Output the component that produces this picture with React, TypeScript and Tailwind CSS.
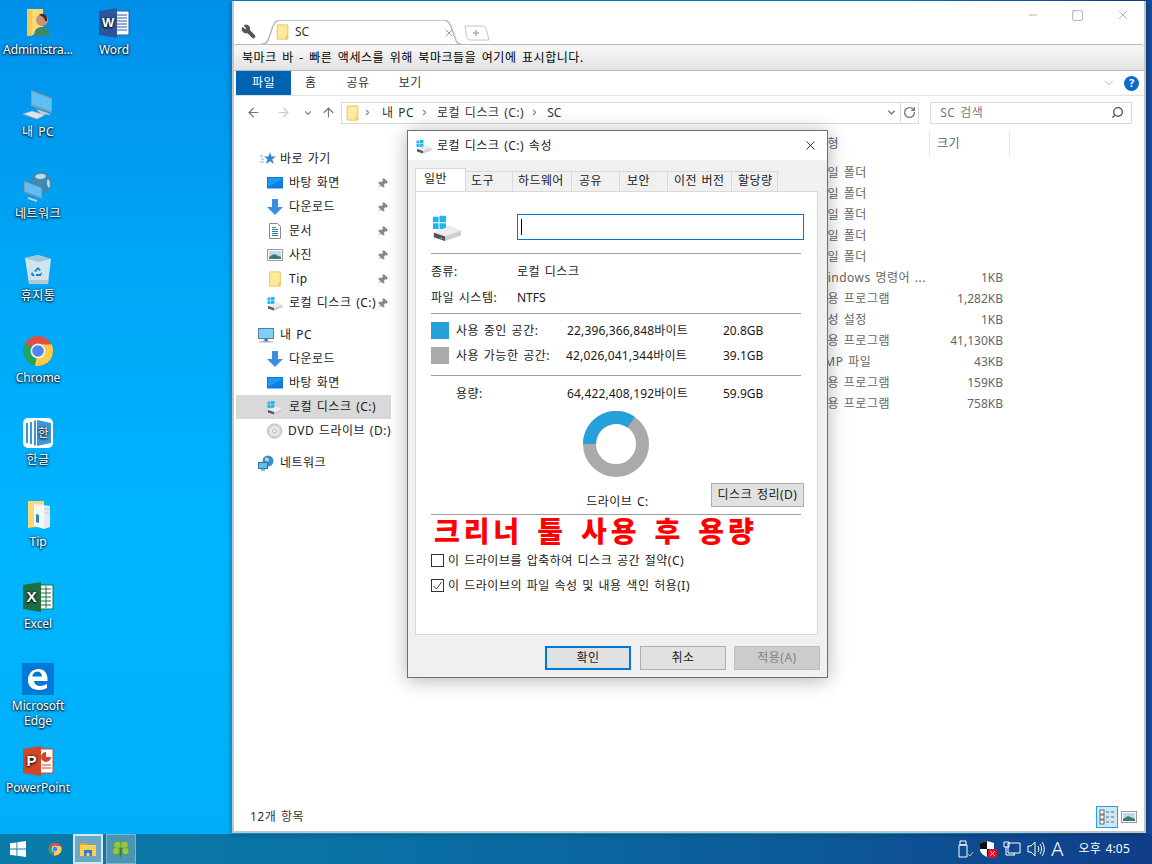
import { ArrowLeft, ArrowRight, ArrowUp, ChevronDown, ChevronRight, Minus, Pin, RotateCw, Search, Square, Wrench, X } from "lucide-react";
import type { ReactNode } from "react";

const FolderIcon = ({ className = "" }: { className?: string }) => (
	<svg viewBox="0 0 14 18" className={className}>
		<path d="M1 1h12v16H1z" fill="#ffe99a" stroke="#e6c354" />
		<path d="M10.500 13h2.500v4h-2.500z" fill="#f2cb58" />
	</svg>
);

const DriveIcon = ({ size = 16 }: { size?: number }) => (
	<svg viewBox="0 0 32 32" width={size} height={size}>
		<path d="M1 5h6v6H1zM8 4h7v7H8zM1 12h6v6H1zM8 12h7v6H8z" fill="#1fb6f0" />
		<path d="M2 22l17-7 12 5v5L14 31 2 27z" fill="#cfcfcf" />
		<path d="M2 22l12 4 17-6-12-5z" fill="#ededed" />
		<path d="M2 22l12 4v5L2 27z" fill="#555" />
		<path d="M9 27l2 .7v1.300L9 28.300z" fill="#5fd35f" />
	</svg>
);

const DesktopBlue = () => (
	<svg viewBox="0 0 16 16" className="size-4">
		<rect x="0" y="2" width="16" height="12" fill="#0f74d8" />
		<rect x="1" y="3" width="14" height="9" fill="#1e9bf0" />
		<path d="M1 12l14-8v8z" fill="#0d7fe0" />
		<rect x="0" y="13" width="16" height="1" fill="#7fc4f5" />
	</svg>
);

const DownloadBlue = () => (
	<svg viewBox="0 0 16 16" className="size-4">
		<path d="M5 0h6v8h5l-8 8-8-8h5z" fill="#3b8fe0" />
	</svg>
);

const DocIcon = () => (
	<svg viewBox="0 0 16 16" className="size-4">
		<path d="M2.500.5h8l3 3v12h-11z" fill="#fff" stroke="#8a8a8a" />
		<path d="M5 4.500h4M5 6.500h6M5 8.500h6M5 10.500h6M5 12.500h6" stroke="#2f7f9f" />
	</svg>
);

const PictureIcon = ({ className = "size-4" }: { className?: string }) => (
	<svg viewBox="0 0 16 14" className={className}>
		<rect x=".5" y="1.500" width="15" height="11" fill="#fff" stroke="#9a9a9a" />
		<rect x="2" y="3" width="12" height="8" fill="#bcd9ef" />
		<path d="M2 9l5-3 7 3v2H2z" fill="#3e7a70" />
	</svg>
);

const MonitorSmall = () => (
	<svg viewBox="0 0 16 16" className="size-4">
		<rect x=".5" y="1.500" width="15" height="10" fill="#7fd0f7" stroke="#5a7f9c" />
		<path d="M5 14h6M7 12h2v2H7z" stroke="#5a7f9c" />
		<path d="M1 15h14" stroke="#9ab0c0" />
	</svg>
);

const NetworkSmall = () => (
	<svg viewBox="0 0 16 16" className="size-4">
		<circle cx="10" cy="6" r="5.500" fill="#3d8fc8" />
		<path d="M7 3c2-1 4 0 4 2s-3 2-4 0z" fill="#a9d8ee" />
		<rect x=".5" y="7.500" width="9" height="6" fill="#5cc0f2" stroke="#3a6f94" />
		<path d="M3 15h4" stroke="#3a6f94" />
	</svg>
);

const StarBlue = () => (
	<svg viewBox="0 0 16 16" className="size-4">
		<path d="M10 1l1.500 4.500H16l-3.700 2.800 1.400 4.700L10 10.200 6 13l1.400-4.700L4 5.500h4.500z" fill="#2f86dd" />
		<path d="M0 5h3M1 8h3M0 11h4" stroke="#7db8ec" />
	</svg>
);

const DvdIcon = () => (
	<svg viewBox="0 0 16 16" className="size-4">
		<circle cx="8" cy="8" r="7.500" fill="#d8d8d8" stroke="#b5b5b5" />
		<circle cx="8" cy="8" r="5" fill="#e9e9e9" />
		<circle cx="8" cy="8" r="2" fill="#fff" stroke="#aaa" />
	</svg>
);

const AdminIcon = () => (
	<svg viewBox="0 0 32 32" className="size-8">
		<path d="M5 2h16v24L5 29z" fill="#f9d976" />
		<path d="M5 2l5 2v25l-5-1z" fill="#f5c85a" />
		<path d="M12 29c0-7 4-9 8-9s8 2 8 9z" fill="#3d8a6a" />
		<circle cx="20" cy="13" r="6" fill="#c9926e" />
		<path d="M17 8c4-3 9 0 8 6l-2 0c0-3-3-5-6-6z" fill="#333" />
	</svg>
);

const WordIcon = () => (
	<svg viewBox="0 0 32 32" className="size-8">
		<rect x="17" y="4" width="14" height="24" fill="#fff" stroke="#2b5ba8" />
		<path d="M19 8h10M19 11h10M19 14h10M19 17h10M19 20h10M19 23h10" stroke="#2b5ba8" />
		<path d="M1 4l18-3v30L1 28z" fill="#2b579a" />
		<text x="10" y="20" fontSize="13" fontWeight="700" fill="#fff" textAnchor="middle" fontFamily="Liberation Sans">W</text>
	</svg>
);

const PcIcon = () => (
	<svg viewBox="0 0 32 32" className="size-8">
		<path d="M9 1l21 8v15L9 17z" fill="#8f9aa5" />
		<path d="M10 3l19 7v12L10 15z" fill="#5cc0f5" />
		<path d="M14 20l12 4 3 2-10-1z" fill="#c8ced3" />
		<path d="M1 25l9-3 13 4-8 4z" fill="#dfe3e6" stroke="#aab" strokeWidth=".5" />
	</svg>
);

const NetworkIcon = () => (
	<svg viewBox="0 0 32 32" className="size-8">
		<circle cx="19" cy="12" r="11" fill="#3f89b0" />
		<path d="M13 5c4-3 9-3 11 0-1 3-4 3-6 3s-4 0-5-3zM26 8c2 2 3 6 1 9-2-2-3-6-1-9z" fill="#b9dbe8" />
		<path d="M2 10l18 7v11L2 21z" fill="#8d9aa5" />
		<path d="M3 11l16 6v9L3 20z" fill="#5cc0f5" />
		<path d="M6 26l9 3v2l-9-3z" fill="#c8ced3" />
	</svg>
);

const BinIcon = () => (
	<svg viewBox="0 0 32 32" className="size-8">
		<path d="M3 5l13-3 13 4-3 25H7z" fill="#cfe4ee" />
		<path d="M3 5l13-3 13 4-13 3z" fill="#9fc8dc" />
		<path d="M7 27h19l-.5 4H7.500z" fill="#b9c6cc" />
		<path d="M16 14l3 3-2 1-1-2-2 3-2-1zM20 19l-1 4h-5v-2h4zM10 19l3 4-3 0-1-2z" fill="#1c7fc8" />
	</svg>
);

const ChromeIcon = ({ className = "size-8" }: { className?: string }) => (
	<svg viewBox="0 0 32 32" className={className}>
		<circle cx="16" cy="16" r="15" fill="#dd5044" />
		<path d="M16 16L3 8.500A15 15 0 0 0 13 30.700z" fill="#1fa463" />
		<path d="M16 16h15a15 15 0 0 1-18 14.700z" fill="#ffcd40" />
		<path d="M16 9.500h13.800A15 15 0 0 1 31 16H16z" fill="#ffcd40" />
		<circle cx="16" cy="16" r="7.500" fill="#f1f1f1" />
		<circle cx="16" cy="16" r="5.800" fill="#4f86ec" />
	</svg>
);

const HangulIcon = () => (
	<svg viewBox="0 0 32 32" className="size-8">
		<rect x="1" y="1" width="30" height="30" rx="5" fill="#fff" />
		<path d="M4 6h2v20H4zM8 5h2v22H8zM12 3.500h2v25h-2z" fill="#3a97d8" />
		<path d="M15 3l14 3v20l-14 3z" fill="#3a97d8" />
		<text x="21.500" y="20" fontSize="11" fill="#fff" textAnchor="middle" fontFamily="Noto Sans CJK KR">한</text>
	</svg>
);

const TipIcon = () => (
	<svg viewBox="0 0 32 32" className="size-8">
		<path d="M6 2h16v25L6 29z" fill="#f9d976" />
		<path d="M12 5l10 1 0 24-10-3z" fill="#f4f7f8" />
		<path d="M22 6l6 1v21l-6 2z" fill="#e4eaec" />
		<path d="M14 15l3 1v8l-3-1z" fill="#2a80c0" />
		<path d="M23 10h4M23 14h4" stroke="#b9c6cc" />
	</svg>
);

const ExcelIcon = () => (
	<svg viewBox="0 0 32 32" className="size-8">
		<rect x="17" y="4" width="14" height="24" fill="#fff" stroke="#1e7145" />
		<path d="M19 8h10M19 12h10M19 16h10M19 20h10M19 24h10M24 5v22" stroke="#1e7145" />
		<path d="M1 4l18-3v30L1 28z" fill="#1e6e42" />
		<text x="9.500" y="21" fontSize="15" fontWeight="700" fill="#fff" textAnchor="middle" fontFamily="Liberation Sans">X</text>
	</svg>
);

const EdgeIcon = () => (
	<svg viewBox="0 0 32 32" className="size-8">
		<rect width="32" height="32" fill="#0078d7" />
		<path d="M6 16c.5-6 5-10 10.500-10 5.500 0 9 4 9 10v2H12c.5 3.500 3 5 6 5 2.500 0 5-.7 7-2v4c-2 1.300-5 2-8 2-7 0-11-4-11-9.500 0-2 .5-3 1-4 1-2 3-3 5-3.500-1 1-1.500 2-1.700 3.500h9.700c0-3-2-5-4.500-5C11.500 9 8.500 12 6 16z" fill="#fff" />
	</svg>
);

const PptIcon = () => (
	<svg viewBox="0 0 32 32" className="size-8">
		<rect x="17" y="4" width="14" height="24" fill="#fff" stroke="#d24726" />
		<path d="M24 7a5 5 0 1 0 5 5h-5z" fill="#d24726" />
		<path d="M20 20h9M20 23h9" stroke="#d24726" />
		<path d="M1 4l18-3v30L1 28z" fill="#d24726" />
		<text x="9.500" y="21" fontSize="15" fontWeight="700" fill="#fff" textAnchor="middle" fontFamily="Liberation Sans">P</text>
	</svg>
);

const WinLogo = () => (
	<svg viewBox="0 0 16 16" className="size-4">
		<path d="M0 2.300l6.500-.9v6.200H0zM7.400 1.300L16 0v7.600H7.400zM0 8.500h6.500v6.200L0 13.800zM7.400 8.500H16V16l-8.600-1.200z" fill="#fff" />
	</svg>
);

const ExplorerTask = () => (
	<svg viewBox="0 0 16 16" className="size-4">
		<path d="M0 2h6l1 2h9v11H0z" fill="#ffd04f" />
		<path d="M0 2h6l1 2H0z" fill="#e8a317" />
		<path d="M4 9h8v6H9.500v-3h-3v3H4z" fill="#2f7fd6" />
	</svg>
);

const CloverIcon = () => (
	<svg viewBox="0 0 18 18" className="size-[18px]">
		<g fill="#93c94a" stroke="#5e8f2a" strokeWidth=".5">
			<circle cx="5.500" cy="5" r="3.700" />
			<circle cx="12.500" cy="5" r="3.700" />
			<circle cx="4" cy="11" r="3.500" />
			<circle cx="13.500" cy="11" r="3.500" />
		</g>
		<path d="M9 8c0 4 0 6-1 9" stroke="#3f7a1f" strokeWidth="1.500" fill="none" />
	</svg>
);

const desktopIcons: { label: ReactNode; icon: ReactNode; col: "a" | "b"; kr?: boolean }[] = [
	{ label: "Administra...", icon: <AdminIcon />, col: "a" },
	{ label: "Word", icon: <WordIcon />, col: "b" },
	{ label: "내 PC", icon: <PcIcon />, col: "a", kr: true },
	{ label: "네트워크", icon: <NetworkIcon />, col: "a", kr: true },
	{ label: "휴지통", icon: <BinIcon />, col: "a", kr: true },
	{ label: "Chrome", icon: <ChromeIcon />, col: "a" },
	{ label: "한글", icon: <HangulIcon />, col: "a", kr: true },
	{ label: "Tip", icon: <TipIcon />, col: "a" },
	{ label: "Excel", icon: <ExcelIcon />, col: "a" },
	{ label: <>Microsoft<br />Edge</>, icon: <EdgeIcon />, col: "a" },
	{ label: "PowerPoint", icon: <PptIcon />, col: "a" },
];

const pinned: { name: string; icon: ReactNode }[] = [
	{ name: "바탕 화면", icon: <DesktopBlue /> },
	{ name: "다운로드", icon: <DownloadBlue /> },
	{ name: "문서", icon: <DocIcon /> },
	{ name: "사진", icon: <PictureIcon /> },
	{ name: "Tip", icon: <FolderIcon className="size-4" /> },
	{ name: "로컬 디스크 (C:)", icon: <DriveIcon /> },
];

const pcItems: { name: string; icon: ReactNode; selected?: boolean }[] = [
	{ name: "다운로드", icon: <DownloadBlue /> },
	{ name: "바탕 화면", icon: <DesktopBlue /> },
	{ name: "로컬 디스크 (C:)", icon: <DriveIcon />, selected: true },
	{ name: "DVD 드라이브 (D:)", icon: <DvdIcon /> },
];

const files = [
	{ type: "파일 폴더", size: "" },
	{ type: "파일 폴더", size: "" },
	{ type: "파일 폴더", size: "" },
	{ type: "파일 폴더", size: "" },
	{ type: "파일 폴더", size: "" },
	{ type: "Windows 명령어 ...", size: "1KB" },
	{ type: "응용 프로그램", size: "1,282KB" },
	{ type: "구성 설정", size: "1KB" },
	{ type: "응용 프로그램", size: "41,130KB" },
	{ type: "BMP 파일", size: "43KB" },
	{ type: "응용 프로그램", size: "159KB" },
	{ type: "응용 프로그램", size: "758KB" },
];

const tabs = [
	{ name: "도구", w: "w-[47px] pl-[5px]" },
	{ name: "하드웨어", w: "w-[59px] pl-[5px]" },
	{ name: "공유", w: "w-[48px] pl-[7px]" },
	{ name: "보안", w: "w-[48px] pl-[7px]" },
	{ name: "이전 버전", w: "w-[64px] pl-[6px]" },
	{ name: "할당량", w: "w-[46px] pl-[6px]" },
];

const Rule = ({ className = "" }: { className?: string }) => <div className={`h-px w-[370px] bg-[#a0a0a0] ${className}`} />;

const App = () => {
	return (
		<div className="relative flex h-[864px] w-[1152px] flex-col overflow-hidden font-['Noto_Sans','Noto_Sans_CJK_KR',sans-serif] text-[12px] tracking-[0.5px] text-[#1a1a1a] [word-spacing:1.1px]">
			<div className="relative flex-1 bg-[linear-gradient(90deg,transparent_78%,#154d9e_98%),linear-gradient(180deg,#0090ea_0%,#00a8f6_35%,#00b5ff_65%,#00aff8_100%)]">
				{/* Desktop icons */}
				<div className="grid w-[152px] grid-cols-[76px_76px] auto-rows-[82px]">
					{desktopIcons.map((item, i) => (
						<div
							key={i}
							className={`flex flex-col items-center pt-[7px] text-center leading-[15px] text-white [text-shadow:0_1px_2px_#000,0_0_3px_#024] ${item.kr ? "" : "tracking-[-0.1px]"} ${item.col === "a" ? "col-start-1" : "col-start-2 row-start-1"}`}
						>
							{item.icon}
							<div className="mt-[3px]">{item.label}</div>
						</div>
					))}
				</div>

				{/* Explorer window */}
				<div className="absolute left-[232px] top-[1px] flex h-[832px] w-[914px] flex-col border-2 border-t-0 border-[#c4c4c4] bg-white shadow-[0_0_6px_rgba(0,0,0,0.4)]">
					<div className="relative flex h-[43px] items-end">
						<Wrench size={15} className="mb-[5px] ml-[7px] -scale-x-100 fill-[#555] text-[#555]" />
						<div className="relative ml-[6px] flex h-[24px] w-[199px] items-center">
							<svg viewBox="0 0 199 24" className="absolute inset-0 h-full w-full">
								<path d="M0 24C6 24 6 20 9 12 11 5 13 0 18 0H181C187 0 189 5 191 12 194 20 194 24 199 24" fill="#fff" stroke="#b8b8b8" strokeWidth="1.500" />
							</svg>
							<FolderIcon className="relative ml-[14px] h-[16px] w-[13px]" />
							<span className="relative ml-[6px] tracking-normal text-[#333]">SC</span>
							<X size={12} className="absolute left-[181px] top-[7px] text-[#999]" />
						</div>
						<svg viewBox="0 0 26 16" className="mb-[3px] ml-[3px] h-[16px] w-[26px]">
							<path d="M1 1h17c3 0 4 2 5 6l2 8H6C3 15 3 12 2 7z" fill="#fff" stroke="#c4c4c4" />
							<path d="M12 5v6M9 8h6" stroke="#bbb" strokeWidth="2" />
						</svg>
						<div className="absolute right-[14px] top-[7px] flex items-center gap-[32px] text-[#777]">
							<Minus size={12} strokeWidth={1} className="scale-x-110" />
							<Square size={13} strokeWidth={1} />
							<X size={14} strokeWidth={1} />
						</div>
					</div>

					<div className="flex h-[27px] items-center rounded-t-[3px] border-y border-[#b9b9b9] bg-[linear-gradient(#f8f8f8,#e2e2e2)] pl-[8px] tracking-[0.55px] text-black [word-spacing:1.8px]">
						북마크 바 - 빠른 액세스를 위해 북마크들을 여기에 표시합니다.
					</div>

					<div className="flex h-[25px] items-center border-b border-[#e0e0e0] pl-[2px] pr-[5px]">
						<div className="flex h-[24px] w-[55px] items-center justify-center bg-[#0063b1] text-white">파일</div>
						<div className="ml-[14px] text-[#333]">홈</div>
						<div className="ml-[30px] text-[#333]">공유</div>
						<div className="ml-[29px] text-[#333]">보기</div>
						<ChevronDown size={14} className="ml-auto text-[#aaa]" strokeWidth={1.5} />
						<div className="ml-[8px] flex size-[15px] items-center justify-center rounded-full bg-[#0a6cc9] text-[11px] font-bold tracking-normal text-white">?</div>
					</div>

					<div className="flex h-[33px] items-center pl-[12px] pr-[12px]">
						<ArrowLeft size={15} className="text-[#777]" />
						<ArrowRight size={15} className="ml-[15px] text-[#ccc]" />
						<ChevronDown size={10} className="ml-[12px] text-[#888]" strokeWidth={3} />
						<ArrowUp size={15} className="ml-[8px] text-[#777]" />
						<div className="ml-[5px] flex h-[22px] w-[579px] items-center border border-[#d9d9d9] pl-[4px] text-[#333]">
							<FolderIcon className="h-[16px] w-[13px]" />
							<ChevronRight size={9} strokeWidth={3} className="ml-[4px] text-[#888]" />
							<span className="ml-[10px]">내 PC</span>
							<ChevronRight size={9} strokeWidth={3} className="ml-[6px] text-[#888]" />
							<span className="ml-[8px]">로컬 디스크 (C:)</span>
							<ChevronRight size={9} strokeWidth={3} className="ml-[6px] text-[#888]" />
							<span className="ml-[8px] tracking-normal">SC</span>
							<ChevronDown size={11} className="ml-auto text-[#666]" strokeWidth={3} />
							<div className="ml-[3px] flex h-full w-[18px] items-center justify-center border-l border-[#d9d9d9]">
								<RotateCw size={13} strokeWidth={2.5} className="text-[#777]" />
							</div>
						</div>
						<div className="ml-[11px] flex h-[22px] w-[202px] items-center justify-between border border-[#d9d9d9] pl-[9px] pr-[7px] text-[#777]">
							<span>SC 검색</span>
							<Search size={13} className="-scale-x-100 text-[#555]" strokeWidth={2.5} />
						</div>
					</div>

					<div className="flex min-h-0 flex-1">
						{/* Nav pane */}
						<div className="w-[157px] pl-[2px] pt-[18px]">
							<div className="flex h-[24px] items-center pl-[24px]"><StarBlue /><span className="ml-[4px]">바로 가기</span></div>
							{pinned.map((item) => (
								<div key={item.name} className="flex h-[24px] items-center pl-[31px] pr-[3px]">
									{item.icon}
									<span className="ml-[6px] whitespace-nowrap">{item.name}</span>
									<Pin size={11} className="ml-auto rotate-45 fill-[#888] text-[#888]" />
								</div>
							))}
							<div className="mt-[8px] flex h-[24px] items-center pl-[22px]"><MonitorSmall /><span className="ml-[6px]">내 PC</span></div>
							{pcItems.map((item) => (
								<div key={item.name} className={`flex h-[24px] items-center pl-[31px] ${item.selected ? "bg-[#d9d9d9]" : ""}`}>
									{item.icon}
									<span className="ml-[6px] whitespace-nowrap">{item.name}</span>
								</div>
							))}
							<div className="mt-[8px] flex h-[24px] items-center pl-[22px]"><NetworkSmall /><span className="ml-[6px]">네트워크</span></div>
						</div>
						{/* File list */}
						<div className="flex-1 pl-[425px] pt-[2px]">
							<div className="flex h-[25px] items-center text-[#4c607a]">
								<div className="flex h-full w-[114px] items-center border-r border-[#e5e5e5]">유형</div>
								<div className="flex h-full w-[80px] items-center border-r border-[#e5e5e5] pl-[7px]">크기</div>
							</div>
							<div className="mt-[6px]">
								{files.map((file, i) => (
									<div key={i} className="flex h-[21px] items-center text-[#666]">
										<div className="w-[114px] whitespace-nowrap">{file.type}</div>
										<div className="w-[73px] text-right tracking-normal">{file.size}</div>
									</div>
								))}
							</div>
						</div>
					</div>

					<div className="flex h-[25px] items-center justify-between pb-[3px] pl-[16px] pr-[7px] text-[#333]">
						<span>12개 항목</span>
						<div className="flex items-center gap-[3px]">
							<div className="flex size-[22px] items-center justify-center border border-[#26a0da] bg-[#cce8f7]">
								<svg viewBox="0 0 16 16" className="size-4">
									<rect x="1" y="1" width="4" height="4" fill="#fff" stroke="#666" />
									<rect x="1" y="6" width="4" height="4" fill="#fff" stroke="#666" />
									<rect x="1" y="11" width="4" height="4" fill="#fff" stroke="#666" />
									<path d="M7 3h3M12 3h3M7 8h3M12 8h3M7 13h3M12 13h3" stroke="#666" />
								</svg>
							</div>
							<PictureIcon />
						</div>
					</div>
				</div>

				{/* Properties dialog */}
				<div className="absolute left-[407px] top-[130px] flex h-[548px] w-[421px] flex-col border border-[#6e6e6e] bg-[#f0f0f0] shadow-[0_2px_18px_rgba(0,0,0,0.3)]">
					<div className="flex h-[29px] items-center bg-white pl-[8px] pr-[9px]">
						<DriveIcon />
						<span className="ml-[5px]">로컬 디스크 (C:) 속성</span>
						<X size={15} strokeWidth={1.25} className="ml-auto text-black" />
					</div>

					<div className="ml-[7px] mt-[8px] flex h-[23px] items-end">
						<div className="relative z-10 flex h-[23px] w-[51px] items-start justify-start border border-b-0 border-[#d9d9d9] bg-white pl-[8px] pt-[1px]">일반</div>
						{tabs.map((tab) => (
							<div key={tab.name} className={`flex h-[20px] items-center whitespace-nowrap border border-b-0 border-l-0 border-[#d9d9d9] pb-[1px] tracking-[0.4px] ${tab.w}`}>
								{tab.name}
							</div>
						))}
					</div>

					<div className="ml-[7px] h-[444px] w-[403px] border border-[#d9d9d9] bg-white pl-[15px]">
						<div className="mt-[22px] flex h-[26px]">
							<div className="flex w-[86px] items-center pl-[1px]">
								<DriveIcon size={30} />
							</div>
							<div className="flex h-[26px] w-[287px] items-center border border-[#0078d7] pl-[3px]">
								<div className="h-[16px] w-px bg-black" />
							</div>
						</div>
						<Rule className="mt-[13px]" />
						<div className="mt-[5px] flex h-[26px] items-center"><span className="w-[86px]">종류:</span><span>로컬 디스크</span></div>
						<div className="flex h-[26px] items-center"><span className="w-[86px]">파일 시스템:</span><span className="tracking-normal">NTFS</span></div>
						<Rule className="mt-[2px]" />
						<div className="mt-[4px] flex h-[25px] items-center">
							<div className="h-[17px] w-[18px] bg-[#26a0da]" />
							<span className="ml-[7px] w-[111px] whitespace-nowrap">사용 중인 공간:</span>
							<span className="w-[156px] whitespace-nowrap tracking-[0.15px]">22,396,366,848바이트</span>
							<span className="tracking-normal">20.8GB</span>
						</div>
						<div className="flex h-[25px] items-center">
							<div className="h-[17px] w-[18px] bg-[#aaaaaa]" />
							<span className="ml-[7px] w-[110px] whitespace-nowrap">사용 가능한 공간:</span>
							<span className="w-[157px] whitespace-nowrap tracking-[0.15px]">42,026,041,344바이트</span>
							<span className="tracking-normal">39.1GB</span>
						</div>
						<Rule className="mt-[7px]" />
						<div className="mt-[8px] flex h-[20px] items-center">
							<span className="ml-[25px] w-[111px]">용량:</span>
							<span className="w-[156px] whitespace-nowrap tracking-[0.15px]">64,422,408,192바이트</span>
							<span className="tracking-normal">59.9GB</span>
						</div>
						<div className="mt-[7px] flex w-[370px] justify-center">
							<svg viewBox="0 0 66 66" className="size-[66px]">
								<circle cx="33" cy="33" r="26.500" fill="none" stroke="#aaaaaa" strokeWidth="13" />
								<path d="M6.500 33A26.500 26.500 0 0 1 48.200 11.300" fill="none" stroke="#26a0da" strokeWidth="13" />
							</svg>
						</div>
						<div className="mt-[6px] grid w-[373px] grid-cols-[1fr_auto_1fr] items-end">
							<div />
							<span className="-mb-[3px] leading-[16px]">드라이브 C:</span>
							<div className="flex justify-end">
								<div className="flex h-[24px] w-[93px] items-center justify-center border border-[#adadad] bg-[#e1e1e1]">디스크 정리(D)</div>
							</div>
						</div>
						<Rule className="mt-[7px]" />
						<div className="flex h-[32px] items-center whitespace-nowrap pl-[3px] text-[28px] font-black leading-[32px] tracking-[3.900px] text-[#ff0000] [word-spacing:3px]">
							크리너 툴 사용 후 용량
						</div>
						<div className="mt-[1px] flex h-[25px] items-center">
							<div className="size-[13px] border border-[#333] bg-white" />
							<span className="ml-[4px]">이 드라이브를 압축하여 디스크 공간 절약(C)</span>
						</div>
						<div className="flex h-[25px] items-center">
							<div className="flex size-[13px] items-center justify-center border border-[#333] bg-white">
								<svg viewBox="0 0 11 11" className="size-[11px]"><path d="M1.500 6l3 3 5-7" fill="none" stroke="#444" /></svg>
							</div>
							<span className="ml-[4px]">이 드라이브의 파일 속성 및 내용 색인 허용(I)</span>
						</div>
					</div>

					<div className="mt-[11px] flex justify-end pr-[7px]">
						<div className="flex h-[24px] w-[86px] items-center justify-center border-2 border-[#0078d7] bg-[#e1e1e1]">확인</div>
						<div className="ml-[9px] flex h-[24px] w-[86px] items-center justify-center border border-[#adadad] bg-[#e1e1e1]">취소</div>
						<div className="ml-[8px] flex h-[24px] w-[86px] items-center justify-center border border-[#bfbfbf] bg-[#cccccc] text-[#838383]">적용(A)</div>
					</div>
				</div>
			</div>

			{/* Taskbar */}
			<div className="flex h-[30px] items-center bg-[linear-gradient(90deg,#0a7ba8_0%,#0a6fa4_35%,#0c5a98_70%,#103d8a_100%)] text-white">
				<div className="ml-[10px]"><WinLogo /></div>
				<ChromeIcon className="ml-[22px] size-[14px]" />
				<div className="ml-[11px] flex h-[30px] w-[30px] items-center justify-center border-2 border-[#d6e6ee] bg-[#6aa8c4]"><ExplorerTask /></div>
				<div className="ml-[3px] flex h-[30px] w-[30px] items-center justify-center border border-[#7fb3cc] bg-[#4d93b4]"><CloverIcon /></div>
				<div className="ml-auto flex items-center">
					<svg viewBox="0 0 16 18" className="h-[18px] w-[16px]">
						<path d="M2 1h6v4H2zM1 5h8v12H1z" fill="none" stroke="#fff" />
						<path d="M10 14l2 2 3-4" fill="none" stroke="#9cc" />
					</svg>
					<svg viewBox="0 0 18 18" className="ml-[5px] size-[18px]">
						<path d="M8 1l7 2v6c0 4-3 6-7 8-4-2-7-4-7-8V3z" fill="#fff" />
						<path d="M1 3l7-2v8H1zM8 9h7c0 4-3 6-7 8z" fill="#111" />
						<rect x="9" y="9" width="9" height="9" rx="2" fill="#e81123" />
						<path d="M11.500 11.500l4 4M15.500 11.500l-4 4" stroke="#fff" />
					</svg>
					<svg viewBox="0 0 18 18" className="ml-[6px] size-[18px]">
						<path d="M5 3h12v10H5zM1 2h5v5H1zM3 7v8h9M11 13v2" fill="none" stroke="#fff" />
					</svg>
					<svg viewBox="0 0 18 16" className="ml-[6px] h-[16px] w-[18px]">
						<path d="M1 5h3l4-4v14l-4-4H1zM11 5c1 2 1 4 0 6M13 3c2 3 2 7 0 10M15 1c3 4 3 10 0 14" fill="none" stroke="#fff" />
					</svg>
					<span className="ml-[6px] text-[20px] font-light leading-none tracking-normal">A</span>
					<span className="ml-[15px] mr-[22px] whitespace-nowrap tracking-[0.2px]">오후 4:05</span>
				</div>
			</div>
		</div>
	);
};

export default App;
